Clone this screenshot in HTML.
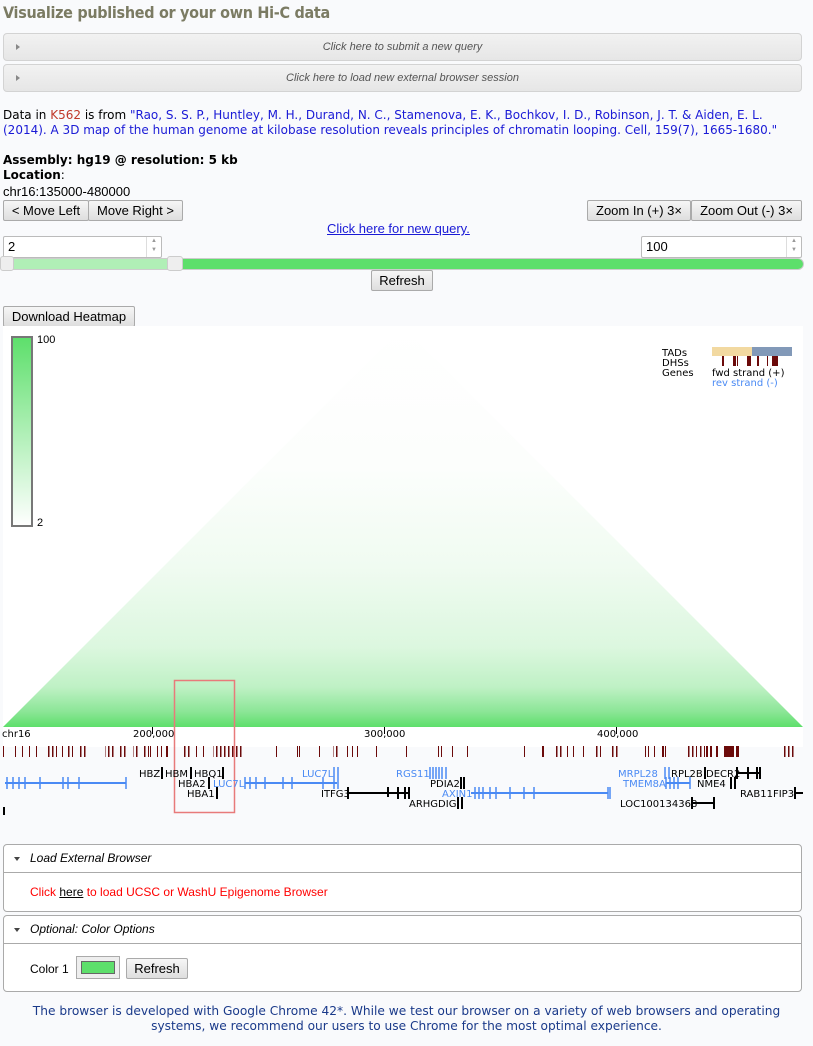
<!DOCTYPE html>
<html><head><meta charset="utf-8"><style>
*{box-sizing:border-box}
body{margin:0;background:#f9fafc;font-family:"DejaVu Sans",sans-serif;font-size:12px;color:#000;width:813px;height:1046px;overflow:hidden;position:relative}
.a{position:absolute}
h1{position:absolute;left:3px;top:3px;margin:0;font:bold 16px "DejaVu Sans Condensed","DejaVu Sans",sans-serif;color:#7b7b63;letter-spacing:-0.3px}
.acc{position:absolute;left:3px;width:799px;height:28px;border:1px solid #d3d3d3;border-radius:4px;background:linear-gradient(#f2f2f2,#e6e6e6);font:italic 11px "Liberation Sans",sans-serif;color:#555;text-align:center;line-height:27px}
.acc:before{content:"";position:absolute;left:12px;top:10px;border-left:4px solid #888;border-top:3.5px solid transparent;border-bottom:3.5px solid transparent}
.btn{position:absolute;height:21px;border:1px solid #aaa;background:linear-gradient(#f6f6f6,#dedede);font:13px "Liberation Sans",sans-serif;line-height:19px;text-align:center;border-radius:2px}
.inp{position:absolute;height:22px;border:1px solid #bbb;background:#fff;font:13px "Liberation Sans",sans-serif;line-height:20px;padding-left:4px;border-radius:2px}
.spin{position:absolute;right:0;top:0;width:15px;height:20px;border-left:1px solid #ddd;font-size:6px;color:#999;text-align:center;line-height:9px}
.panel{position:absolute;left:3px;width:799px;border:1px solid #aaa;border-radius:4px;background:#fff}
.ph{height:28px;border-bottom:1px solid #aaa;font:italic 12px "Liberation Sans",sans-serif;line-height:27px;padding-left:26px;position:relative}
.ph:before{content:"";position:absolute;left:10px;top:12px;border-top:4px solid #444;border-left:3.5px solid transparent;border-right:3.5px solid transparent}
</style></head><body>
<h1>Visualize published or your own Hi-C data</h1>
<div class="acc" style="top:33px">Click here to submit a new query</div>
<div class="acc" style="top:64px">Click here to load new external browser session</div>
<div class="a" style="left:3px;top:108px;width:805px;line-height:15px;color:#000">Data in <span style="color:#c0392b">K562</span> is from <span style="color:#1a1ad6">"Rao, S. S. P., Huntley, M. H., Durand, N. C., Stamenova, E. K., Bochkov, I. D., Robinson, J. T. &amp; Aiden, E. L. (2014). A 3D map of the human genome at kilobase resolution reveals principles of chromatin looping. Cell, 159(7), 1665-1680."</span></div>
<div class="a" style="left:3px;top:153px;font-weight:bold;line-height:15px">Assembly: hg19 @ resolution: 5 kb<br>Location<span style="font-weight:normal">:</span></div>
<div class="a" style="left:3px;top:184px;font:13px 'Liberation Sans',sans-serif">chr16:135000-480000</div>
<div class="btn" style="left:3px;top:200px;width:86px">&lt; Move Left</div>
<div class="btn" style="left:88px;top:200px;width:95px">Move Right &gt;</div>
<div class="btn" style="left:587px;top:200px;width:104px">Zoom In (+) 3×</div>
<div class="btn" style="left:691px;top:200px;width:111px">Zoom Out (-) 3×</div>
<div class="a" style="left:327px;top:221px;font:13px 'Liberation Sans',sans-serif;color:#1a1ad6;text-decoration:underline">Click here for new query.</div>
<div class="inp" style="left:3px;top:236px;width:159px">2<div class="spin">▲<br>▼</div></div>
<div class="inp" style="left:641px;top:236px;width:161px">100<div class="spin">▲<br>▼</div></div>
<div class="a" style="left:0;top:258px;width:804px;height:12px;border-radius:6px;background:#5ddf6b;border:1px solid #ccc"></div>
<div class="a" style="left:8px;top:259px;width:167px;height:10px;background:#b0efb6"></div>
<div class="a" style="left:0;top:256px;width:14px;height:15px;border:1px solid #ccc;border-radius:3px;background:#eee"></div>
<div class="a" style="left:167px;top:256px;width:16px;height:15px;border:1px solid #ccc;border-radius:3px;background:#eee"></div>
<div class="btn" style="left:371px;top:270px;width:62px">Refresh</div>
<div class="btn" style="left:3px;top:306px;width:132px">Download Heatmap</div>
<div class="a" style="left:3px;top:326px;width:800px;height:421px;background:#fff"></div>
<svg class="a" style="left:0;top:326px" width="813" height="500">
<defs>
<linearGradient id="lg" x1="0" y1="0" x2="0" y2="1"><stop offset="0" stop-color="#5ddf6b"/><stop offset="1" stop-color="#fff"/></linearGradient>
<linearGradient id="tg" x1="0" y1="0" x2="0" y2="1"><stop offset="0" stop-color="#fff"/><stop offset="0.35" stop-color="#fcfefc"/><stop offset="0.6" stop-color="#f0fbf1"/><stop offset="0.8" stop-color="#dcf7df"/><stop offset="0.9" stop-color="#bff1c5"/><stop offset="0.96" stop-color="#8de698"/><stop offset="1" stop-color="#5ddf6b"/></linearGradient>
<pattern id="st" width="4" height="11" patternUnits="userSpaceOnUse"><rect width="1.5" height="11" fill="#6b0a0a"/></pattern>
<pattern id="st2" width="2.5" height="11" patternUnits="userSpaceOnUse"><rect width="1.5" height="11" fill="#5a0808"/></pattern>
</defs>
<rect x="12" y="11" width="20" height="189" fill="url(#lg)" stroke="#777" stroke-width="2"/>
<text x="37" y="17" font-family="Liberation Sans" font-size="11">100</text>
<text x="37" y="200" font-family="Liberation Sans" font-size="11">2</text>
<polygon points="3,401 403,1 803,401" fill="url(#tg)"/>
<text x="662" y="30" font-family="DejaVu Sans" font-size="10">TADs</text>
<text x="662" y="40" font-family="DejaVu Sans" font-size="10">DHSs</text>
<text x="662" y="50" font-family="DejaVu Sans" font-size="10">Genes</text>
<rect x="712" y="21" width="40" height="9" fill="#f2d9a1"/><rect x="752" y="21" width="40" height="9" fill="#8299b8"/>
<g fill="#6b0a0a"><rect x="722" y="30" width="2" height="10"/><rect x="733" y="30" width="3" height="10"/><rect x="737" y="30" width="1" height="10"/><rect x="747" y="30" width="4" height="10"/><rect x="757" y="30" width="2" height="10"/><rect x="767" y="30" width="1" height="10"/><rect x="772" y="30" width="6" height="10"/></g>
<text x="712" y="50" font-family="DejaVu Sans" font-size="10">fwd strand (+)</text>
<text x="712" y="60" font-family="DejaVu Sans" font-size="10" fill="#4a8af4">rev strand (-)</text>
<rect x="174.5" y="354.5" width="60" height="132" fill="none" stroke="#e87a7a" stroke-width="1.5"/>
<g font-family="DejaVu Sans" font-size="10">
<text x="2" y="411">chr16</text><text x="133" y="411">200,000</text><text x="364" y="411">300,000</text><text x="597" y="411">400,000</text>
</g>
<g stroke="#000"><line x1="152.5" y1="401" x2="152.5" y2="408"/><line x1="384.5" y1="401" x2="384.5" y2="408"/><line x1="616.5" y1="401" x2="616.5" y2="408"/></g>
<g fill="#6b0a0a">
<rect x="3" y="420" width="1" height="11"/><rect x="15" y="420" width="1" height="11"/><rect x="22" y="420" width="1" height="11"/><rect x="29" y="420" width="1" height="11"/><rect x="36" y="420" width="1" height="11"/>
<rect x="62" y="420" width="1" height="11"/><rect x="150" y="420" width="1" height="11"/><rect x="157" y="420" width="1" height="11"/><rect x="161" y="420" width="1" height="11"/><rect x="166" y="420" width="2" height="11"/>
<rect x="196" y="420" width="1" height="11"/><rect x="203" y="420" width="1" height="11"/>
<rect x="276" y="420" width="1" height="11"/><rect x="297" y="420" width="1" height="11"/><rect x="299" y="420" width="1" height="11"/><rect x="319" y="420" width="1" height="11"/><rect x="347" y="420" width="1" height="11"/><rect x="352" y="420" width="1" height="11"/><rect x="357" y="420" width="1" height="11"/><rect x="376" y="420" width="1" height="11"/>
<rect x="406" y="420" width="1" height="11"/><rect x="438" y="420" width="1" height="11"/><rect x="441" y="420" width="1" height="11"/><rect x="452" y="420" width="1" height="11"/><rect x="467" y="420" width="1" height="11"/>
<rect x="524" y="420" width="1" height="11"/><rect x="542" y="420" width="2" height="11"/><rect x="567" y="420" width="1" height="11"/><rect x="573" y="420" width="1" height="11"/><rect x="583" y="420" width="1" height="11"/>
<rect x="645" y="420" width="1" height="11"/><rect x="648" y="420" width="1" height="11"/><rect x="654" y="420" width="1" height="11"/><rect x="662" y="420" width="2" height="11"/><rect x="665" y="420" width="1" height="11"/>
<rect x="706" y="420" width="2" height="11"/><rect x="710" y="420" width="2" height="11"/><rect x="716" y="420" width="2" height="11"/><rect x="724" y="420" width="10" height="11"/><rect x="736" y="420" width="3" height="11"/>
</g>
<g fill="url(#st)">
<rect x="48" y="420" width="9" height="11"/><rect x="68" y="420" width="5" height="11"/><rect x="78" y="420" width="8" height="11"/>
<rect x="105" y="420" width="11" height="11"/><rect x="118" y="420" width="9" height="11"/><rect x="133" y="420" width="6" height="11"/><rect x="142" y="420" width="7" height="11"/>
<rect x="183" y="420" width="8" height="11"/><rect x="213" y="420" width="29" height="11"/><rect x="333" y="420" width="7" height="11"/>
<rect x="555" y="420" width="9" height="11"/><rect x="595" y="420" width="6" height="11"/><rect x="611" y="420" width="8" height="11"/>
<rect x="688" y="420" width="9" height="11"/><rect x="698" y="420" width="7" height="11"/><rect x="784" y="420" width="11" height="11"/>
</g>
<g stroke="#4a8af4" stroke-width="2">
<line x1="5" y1="457" x2="126" y2="457"/><line x1="245" y1="457" x2="337" y2="457"/><line x1="471" y1="467" x2="608" y2="467"/><line x1="666" y1="457" x2="690" y2="457"/>
</g>
<g stroke="#4a8af4" stroke-width="1.5">
<path d="M7 451v12M13 451v12M19 451v12M25 451v12M40 451v12M63 451v12M68 451v12M79 451v12M126 451v12M245 451v12M250 451v12M256 451v12M265 451v12M283 451v12M292 451v12M323 451v12M334 441v22M338 441v22M430 441v12M433 441v12M436 441v12M439 441v12M442 441v12M446 441v12M475 461v12M479 461v12M483 461v12M490 461v12M496 461v12M510 461v12M524 461v12M534 461v12M608 461v12M610 461v12M665 441v12M669 441v12M666 451v12M670 451v12M674 451v12M678 451v12M690 451v12"/>
</g>
<g stroke="#000" stroke-width="2">
<line x1="348" y1="467" x2="410" y2="467"/><line x1="692" y1="477" x2="715" y2="477"/><line x1="737" y1="447" x2="760" y2="447"/><line x1="795" y1="467" x2="803" y2="467"/>
</g>
<g stroke="#000" stroke-width="2">
<path d="M162 441v12M191 441v12M223 441v12M209 451v12M217 461v12M348 461v12M388 461v10M398 461v12M405 461v12M409 461v12M461 451v12M464 451v12M458 471v12M462 471v12M705 441v12M731 451v12M735 451v12M737 441v12M748 441v12M757 441v12M760 441v12M714 471v12M692 471v12M795 461v12M4 481v8"/>
</g>
<g font-family="DejaVu Sans" font-size="10">
<text x="139" y="451">HBZ</text><text x="165" y="451">HBM</text><text x="194" y="451">HBQ1</text><text x="178" y="461">HBA2</text><text x="187" y="471">HBA1</text>
<text x="321" y="471">ITFG3</text><text x="430" y="461">PDIA2</text><text x="409" y="481">ARHGDIG</text>
<text x="671" y="451">RPL2B</text><text x="706" y="451">DECR2</text><text x="697" y="461">NME4</text><text x="740" y="471">RAB11FIP3</text><text x="620" y="481">LOC100134368</text>
<g fill="#4a8af4"><text x="213" y="461">LUC7L</text><text x="302" y="451">LUC7L</text><text x="396" y="451">RGS11</text><text x="442" y="471">AXIN1</text><text x="618" y="451">MRPL28</text><text x="623" y="461">TMEM8A</text></g>
</g>
</svg>
<div class="panel" style="top:844px;height:68px"><div class="ph">Load External Browser</div><div style="padding:12px 0 0 26px;font:12px 'Liberation Sans',sans-serif;color:#f00">Click <span style="color:#000;text-decoration:underline">here</span> to load UCSC or WashU Epigenome Browser</div></div>
<div class="panel" style="top:915px;height:77px"><div class="ph">Optional: Color Options</div>
<div class="a" style="left:26px;top:46px;font:12px 'Liberation Sans',sans-serif">Color 1</div>
<div class="a" style="left:72px;top:40px;width:44px;height:23px;border:1px solid #aaa;background:#eee;padding:4px"><div style="background:#5ddf6b;border:1px solid #666;height:100%"></div></div>
<div class="btn" style="left:122px;top:42px;width:62px">Refresh</div></div>
<div class="a" style="left:0;top:1004px;width:813px;text-align:center;color:#1a3a8a;line-height:15px;font-size:12.2px">The browser is developed with Google Chrome 42*. While we test our browser on a variety of web browsers and operating<br>systems, we recommend our users to use Chrome for the most optimal experience.</div>
</body></html>
